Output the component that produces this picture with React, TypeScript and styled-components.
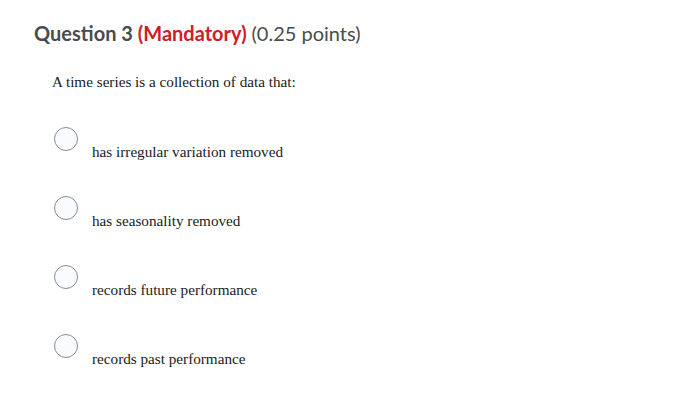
import * as React from 'react';
import styled, { createGlobalStyle } from 'styled-components';

const GlobalStyle = createGlobalStyle`
  body {
    margin: 0;
    background: #ffffff;
  }
`;

const Page = styled.div`
  width: 698px;
  height: 402px;
  padding: 20px 0 0 34px;
  box-sizing: border-box;
`;

const Heading = styled.h2`
  margin: 0;
  font-family: Lato, "Noto Sans", sans-serif;
  font-size: 20px;
  font-weight: 700;
  line-height: 26px;
  color: #494c4e;
`;

const Mandatory = styled.span`
  color: #cd2026;
`;

const Points = styled.span`
  font-weight: 400;
`;

const Body = styled.div`
  padding: 26px 0 0 18px;
  font-family: "Liberation Serif", "Times New Roman", serif;
  font-size: 15.2px;
  color: #202122;
`;

const Stem = styled.p`
  margin: 0;
  line-height: 20px;
`;

const Options = styled.div`
  display: flex;
  flex-direction: column;
  gap: 34px;
  padding-top: 35px;
`;

const Option = styled.label`
  display: flex;
  align-items: flex-start;
  gap: 14px;
`;

const Radio = styled.span`
  width: 22px;
  height: 22px;
  border-radius: 50%;
  border: 1px solid #868c8f;
  background: #f9fbff;
  flex: none;
  margin-left: 2px;
`;

const OptionText = styled.span`
  padding-top: 15px;
  line-height: 20px;
`;

const answers = [
  'has irregular variation removed',
  'has seasonality removed',
  'records future performance',
  'records past performance',
];

export default function App() {
  return (
    <Page>
      <GlobalStyle />
      <Heading>
        Question 3 <Mandatory>(Mandatory)</Mandatory> <Points>(0.25 points)</Points>
      </Heading>
      <Body>
        <Stem>A time series is a collection of data that:</Stem>
        <Options>
          {answers.map((a) => (
            <Option key={a}>
              <Radio />
              <OptionText>{a}</OptionText>
            </Option>
          ))}
        </Options>
      </Body>
    </Page>
  );
}
